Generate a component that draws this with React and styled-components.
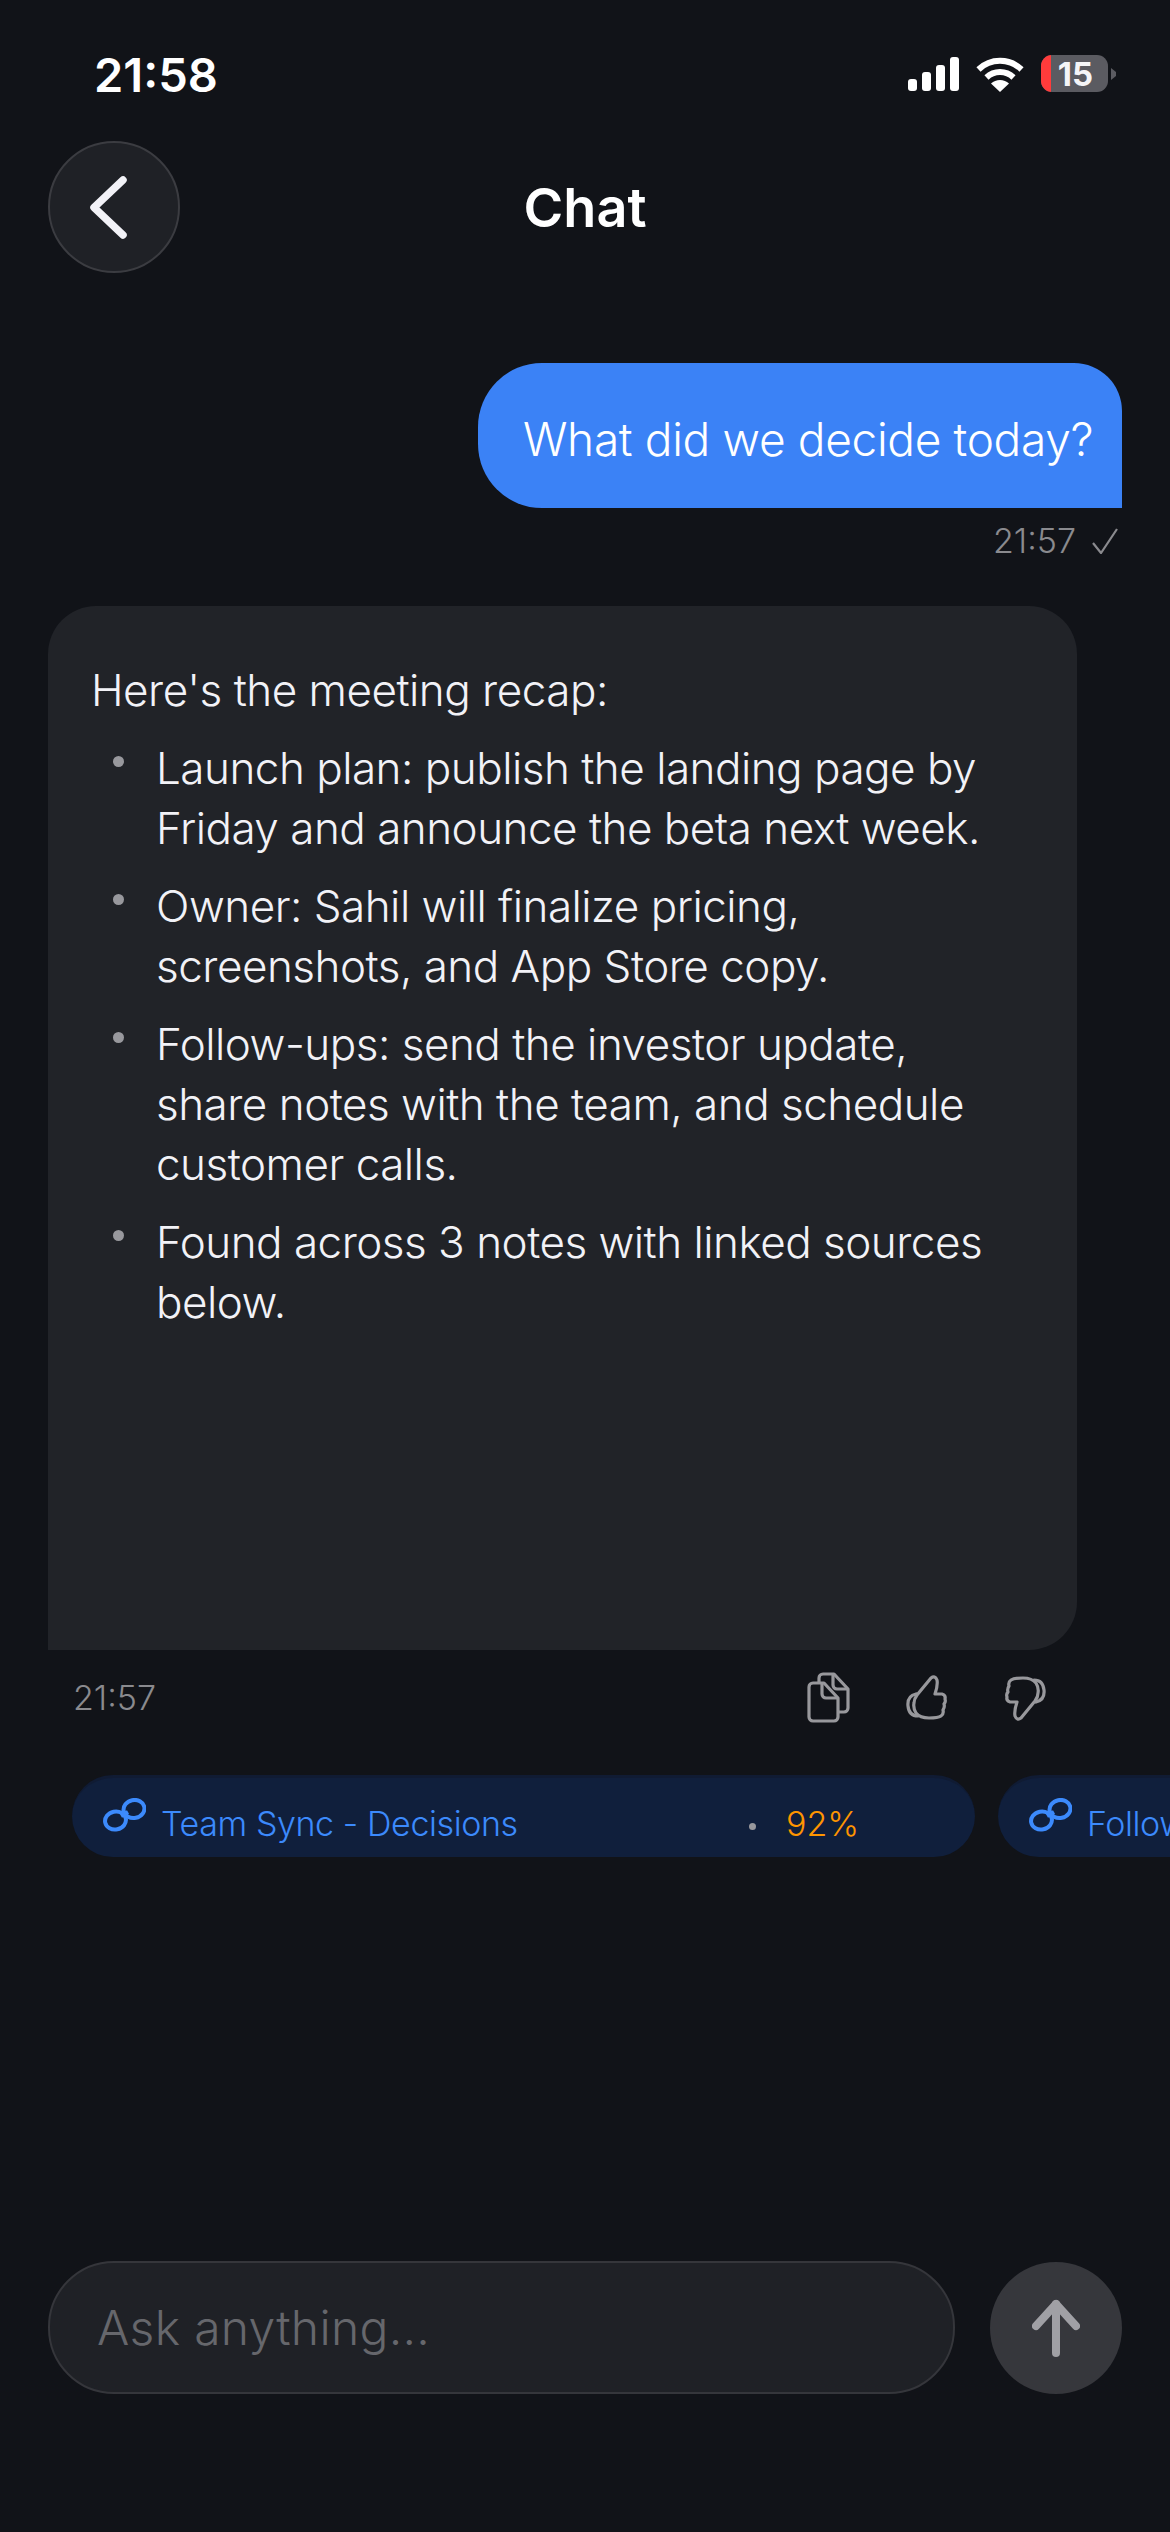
import React from 'react';
import styled, { createGlobalStyle } from 'styled-components';

const GlobalStyle = createGlobalStyle`
  html, body {
    margin: 0;
    padding: 0;
    background: #111318;
  }
  * {
    box-sizing: border-box;
  }
`;

const Screen = styled.div`
  width: 1170px;
  height: 2532px;
  display: flex;
  flex-direction: column;
  overflow: hidden;
  background: #111318;
  color: #f2f2f7;
  font-family: Inter, 'Liberation Sans', sans-serif;
`;

const StatusBar = styled.div`
  height: 141px;
  padding: 51px 54px 0 94px;
  display: flex;
  justify-content: space-between;
  align-items: flex-start;
`;

const Clock = styled.div`
  font-size: 47px;
  line-height: 48px;
  font-weight: 600;
  color: #fff;
`;

const StatusIcons = styled.div`
  display: flex;
  align-items: center;
  gap: 17px;
  padding-top: 4px;
`;

const Battery = styled.div`
  display: flex;
  align-items: center;
  gap: 3px;
`;

const BatteryBody = styled.div`
  width: 67px;
  height: 37px;
  border-radius: 11px;
  background: #5b5b61;
  overflow: hidden;
  display: flex;
  align-items: center;
`;

const BatteryLevel = styled.div`
  width: 10px;
  height: 100%;
  background: #ff3b3b;
`;

const BatteryText = styled.span`
  flex: 1;
  padding-right: 8px;
  text-align: center;
  font-size: 33px;
  font-weight: 700;
  color: #f5f5f7;
`;

const Header = styled.header`
  padding: 0 48px;
  height: 132px;
  display: grid;
  grid-template-columns: 132px 1fr 132px;
  align-items: center;
`;

const BackButton = styled.button`
  width: 132px;
  height: 132px;
  padding: 0;
  border-radius: 50%;
  border: 2px solid #3b3c41;
  background: #1f2126;
  display: flex;
  align-items: center;
  justify-content: center;
`;

const Title = styled.h1`
  margin: 0;
  text-align: center;
  font-size: 54px;
  font-weight: 600;
  color: #fff;
`;

const Thread = styled.main`
  flex: 1;
  padding-top: 90px;
  display: flex;
  flex-direction: column;
`;

const UserBlock = styled.section`
  padding: 0 48px;
  display: flex;
  flex-direction: column;
  align-items: flex-end;
`;

const UserBubble = styled.div`
  height: 145px;
  width: 644px;
  padding: 7px 0 0 45px;
  display: flex;
  align-items: center;
  border-radius: 64px 48px 0 64px;
  background: #3b82f6;
  color: #fff;
  font-size: 46px;
  font-weight: 350;
  letter-spacing: -0.33px;
`;

const Sent = styled.div`
  margin-top: 15px;
  padding-right: 4px;
  display: flex;
  align-items: center;
  gap: 16px;
`;

const Stamp = styled.span`
  font-size: 34px;
  line-height: 36px;
  font-weight: 350;
  color: #8a8a8e;
`;

const AssistantBubble = styled.section`
  margin: 47px 0 0 48px;
  width: 1029px;
  height: 1044px;
  padding: 54px 43px 0;
  border-radius: 48px 48px 48px 0;
  background: #212328;
  font-size: 44px;
  line-height: 60px;
  font-weight: 350;
  letter-spacing: -0.5px;
`;

const Intro = styled.p`
  margin: 0;
`;

const Points = styled.ul`
  margin: 18px 0 0;
  padding: 0 34px 0 65px;
  list-style: none;
  display: flex;
  flex-direction: column;
  gap: 18px;
`;

const Point = styled.li`
  position: relative;
  &::before {
    content: '';
    position: absolute;
    left: -43px;
    top: 18px;
    width: 11px;
    height: 11px;
    border-radius: 50%;
    background: #98989d;
  }
`;

const ActionRow = styled.div`
  padding: 22px 124px 0 73px;
  display: flex;
  align-items: center;
  justify-content: space-between;
`;

const Actions = styled.div`
  display: flex;
  align-items: center;
  gap: 56px;
`;

const Sources = styled.div`
  margin-top: 51px;
  padding-left: 72px;
  display: flex;
  gap: 23px;
  overflow: hidden;
`;

const SourceChip = styled.a`
  flex: none;
  width: ${({ $width }) => $width}px;
  height: 82px;
  padding: 20px 0 0 31px;
  border-radius: 41px;
  border-top: 3px solid #101b33;
  background: #101f3c;
  color: #3c8afc;
  font-size: 34px;
  font-weight: 350;
  letter-spacing: -0.4px;
  display: flex;
  align-items: flex-start;
`;

const SourceName = styled.span`
  margin-left: 15px;
  width: 588px;
  line-height: 52px;
`;

const Dot = styled.i`
  flex: none;
  width: 7px;
  height: 7px;
  margin: 25px 30px 0 0;
  border-radius: 50%;
  background: #98989d;
`;

const Score = styled.span`
  line-height: 52px;
  letter-spacing: 0;
  color: #ff9500;
`;

const Composer = styled.footer`
  padding: 0 48px 138px;
  display: flex;
  align-items: center;
  gap: 35px;
`;

const Field = styled.div`
  flex: 1;
  height: 133px;
  padding: 0 47px;
  display: flex;
  align-items: center;
  border: 2px solid #35363b;
  border-radius: 66px;
  background: #1f2126;
  color: #66676c;
  font-size: 48px;
  font-weight: 350;
  letter-spacing: 0.3px;
`;

const SendButton = styled.button`
  flex: none;
  width: 132px;
  height: 132px;
  padding: 0;
  border: 0;
  border-radius: 50%;
  background: #36373c;
  display: flex;
  align-items: center;
  justify-content: center;
`;

const SignalIcon = () => (
  <svg width="51" height="34" viewBox="0 0 51 34" fill="#fff">
    <rect x="0" y="22" width="9" height="12" rx="3" />
    <rect x="14" y="15" width="9" height="19" rx="3" />
    <rect x="28" y="8" width="9" height="26" rx="3" />
    <rect x="42" y="0" width="9" height="34" rx="3" />
  </svg>
);

const WifiIcon = () => (
  <svg width="48" height="36" viewBox="0 0 48 36" fill="none" stroke="#fff" strokeWidth="6">
    <path d="M2.5 13.5 A31 31 0 0 1 45.5 13.5" />
    <path d="M10.5 21.5 A19.5 19.5 0 0 1 37.5 21.5" />
    <path d="M24 36 L15 27.5 A13 13 0 0 1 33 27.5 Z" fill="#fff" stroke="none" />
  </svg>
);

const BatteryNub = () => (
  <svg width="5" height="12" viewBox="0 0 5 12" fill="#5b5b61">
    <path d="M0 0 L5 4 V8 L0 12 Z" />
  </svg>
);

const BackIcon = () => (
  <svg width="48" height="72" viewBox="0 0 48 72" fill="none" stroke="#f2f2f7" strokeWidth="7.5" strokeLinecap="round" strokeLinejoin="round">
    <path d="M33 9 L4 36.5 L33 64" />
  </svg>
);

const CheckIcon = () => (
  <svg width="26" height="26" viewBox="0 0 26 26" fill="none" stroke="#8a8a8e" strokeWidth="2.2">
    <path d="M1 15 L9 25 L25 1" />
  </svg>
);

const CopyIcon = () => (
  <svg width="43" height="52" viewBox="0 0 43 52" fill="none" stroke="#98989c" strokeWidth="3.2" strokeLinejoin="round">
    <path d="M6 11 H17 L31 26 V45 a4 4 0 0 1 -4 4 H6 a4 4 0 0 1 -4 -4 V15 a4 4 0 0 1 4 -4 Z" />
    <path d="M15 12 V22 a4 4 0 0 0 4 4 H30" />
    <path d="M12 11 V6 a4 4 0 0 1 4 -4 H27 L41 17 V36 a4 4 0 0 1 -4 4 H31" />
    <path d="M26 3 V13 a4 4 0 0 0 4 4 H40" />
  </svg>
);

const ThumbIcon = ({ down }) => (
  <svg width="42" height="46" viewBox="0 0 42 46" fill="none" stroke="#98989c" strokeWidth="3.2" strokeLinecap="round" strokeLinejoin="round" transform={down ? 'rotate(180)' : undefined}>
    <path d="M11 20 L25 3 Q29 0 31 5 Q32 10 29 19 H36 Q40 20 39 24 Q40 27 38 29 Q39 32 37 35 Q38 39 35 41 Q32 43 23 43 Q14 43 10 38 Q7 33 8 28 Q8 24 11 20 Z" />
    <path d="M10 19 Q1 21 2 31 Q3 41 12 41" />
  </svg>
);

const LinkIcon = () => (
  <svg width="43" height="34" viewBox="0 0 43 34" fill="none" stroke="#3c8afc" strokeWidth="4">
    <ellipse cx="12.5" cy="22.5" rx="10.5" ry="9" transform="rotate(-12 12.5 22.5)" />
    <ellipse cx="31" cy="11" rx="10.5" ry="9" transform="rotate(-12 31 11)" />
    <path d="M18 18 L25 14" />
  </svg>
);

const ArrowIcon = () => (
  <svg width="48" height="58" viewBox="0 0 48 58" fill="none" stroke="#a0a0a5" strokeWidth="8" strokeLinecap="round" strokeLinejoin="round">
    <path d="M24 54 V5" />
    <path d="M4 27 L24 5 L44 27" />
  </svg>
);

const recap = [
  'Launch plan: publish the landing page by Friday and announce the beta next week.',
  'Owner: Sahil will finalize pricing, screenshots, and App Store copy.',
  'Follow-ups: send the investor update, share notes with the team, and schedule customer calls.',
  'Found across 3 notes with linked sources below.',
];

const App = () => (
  <Screen>
    <GlobalStyle />
    <StatusBar>
      <Clock>21:58</Clock>
      <StatusIcons>
        <SignalIcon />
        <WifiIcon />
        <Battery>
          <BatteryBody>
            <BatteryLevel />
            <BatteryText>15</BatteryText>
          </BatteryBody>
          <BatteryNub />
        </Battery>
      </StatusIcons>
    </StatusBar>

    <Header>
      <BackButton aria-label="Back">
        <BackIcon />
      </BackButton>
      <Title>Chat</Title>
    </Header>

    <Thread>
      <UserBlock>
        <UserBubble>What did we decide today?</UserBubble>
        <Sent>
          <Stamp>21:57</Stamp>
          <CheckIcon />
        </Sent>
      </UserBlock>

      <AssistantBubble>
        <Intro>Here's the meeting recap:</Intro>
        <Points>
          {recap.map((text) => (
            <Point key={text}>{text}</Point>
          ))}
        </Points>
      </AssistantBubble>

      <ActionRow>
        <Stamp>21:57</Stamp>
        <Actions>
          <CopyIcon />
          <ThumbIcon />
          <ThumbIcon down />
        </Actions>
      </ActionRow>

      <Sources>
        <SourceChip $width={903}>
          <LinkIcon />
          <SourceName>Team Sync - Decisions</SourceName>
          <Dot />
          <Score>92%</Score>
        </SourceChip>
        <SourceChip $width={903}>
          <LinkIcon />
          <SourceName>Follow-ups</SourceName>
        </SourceChip>
      </Sources>
    </Thread>

    <Composer>
      <Field>Ask anything...</Field>
      <SendButton aria-label="Send">
        <ArrowIcon />
      </SendButton>
    </Composer>
  </Screen>
);

export default App;
